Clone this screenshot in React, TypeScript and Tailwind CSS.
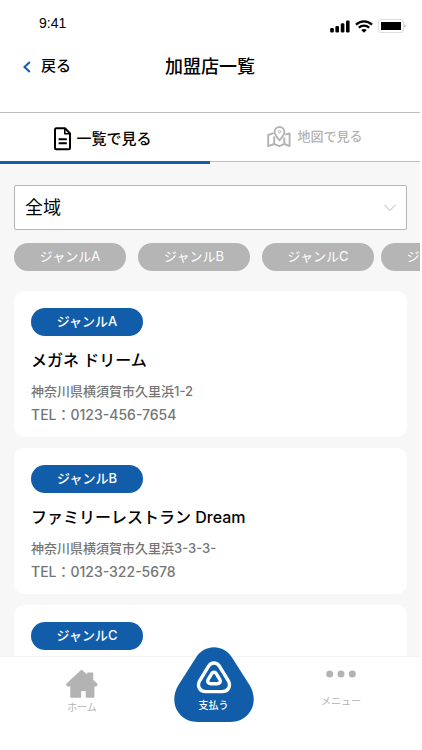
import clsx from "clsx";

type Shop = {
  genre: string;
  name?: string;
  address?: string;
  tel?: string;
};

const GENRE_GROUPS = [["ジャンルA", "ジャンルB", "ジャンルC"], ["ジャンルD"]];

const SHOPS: Shop[] = [
  {
    genre: "ジャンルA",
    name: "メガネ ドリーム",
    address: "神奈川県横須賀市久里浜1-2",
    tel: "0123-456-7654",
  },
  {
    genre: "ジャンルB",
    name: "ファミリーレストラン Dream",
    address: "神奈川県横須賀市久里浜3-3-3-",
    tel: "0123-322-5678",
  },
  { genre: "ジャンルC" },
];

function StatusBar() {
  return (
    <div className="flex h-[46px] items-center justify-between pr-[14px] pl-[39px]">
      <span className="font-['Liberation_Sans'] text-sm">9:41</span>
      <div className="mt-[6px] flex items-center gap-[5px]">
        <svg width="20" height="13" viewBox="0 0 20 13" aria-hidden="true">
          <rect x="0.2" y="8" width="3.6" height="4.6" rx="1.3" />
          <rect x="5.4" y="6" width="3.6" height="6.6" rx="1.3" />
          <rect x="10.8" y="3.3" width="3.6" height="9.3" rx="1.3" />
          <rect x="16" y="0.4" width="3.6" height="12.2" rx="1.3" />
        </svg>
        <svg
          width="18"
          height="13"
          viewBox="0 0 18 13"
          fill="none"
          stroke="black"
          strokeWidth="2.2"
          aria-hidden="true"
        >
          <path d="M1 4.6C5.6 .3 12.4 .3 17 4.6" />
          <path d="M3.8 7.6c3-2.7 7.4-2.7 10.4 0" />
          <path d="M6.2 10c1.6-1.4 4-1.4 5.6 0L9 12.7z" fill="black" stroke="none" />
        </svg>
        <svg width="28" height="14" viewBox="0 0 28 14" aria-hidden="true">
          <rect x="0.5" y="0.5" width="25" height="13" rx="2.5" fill="white" stroke="#dedede" />
          <rect x="3" y="3" width="20" height="8" />
          <path d="M26.6 5.2c1.2.4 1.2 3.2 0 3.6z" fill="#8a8a8a" />
        </svg>
      </div>
    </div>
  );
}

function DocumentIcon() {
  return (
    <svg
      width="18"
      height="24"
      viewBox="0 0 18 24"
      fill="none"
      stroke="currentColor"
      strokeWidth="2"
      strokeLinejoin="round"
      aria-hidden="true"
    >
      <path d="M2.2 1.3h8.8l5 5.2v14.6a1.2 1.2 0 0 1-1.2 1.2H2.2A1.2 1.2 0 0 1 1 21.100V2.5a1.2 1.2 0 0 1 1.2-1.2z" />
      <path d="M10.8 1.6v5.2h5.2" strokeWidth="1.6" />
      <path d="M4.6 12.2h8.2M4.6 16.2h8.2" />
    </svg>
  );
}

function MapIcon() {
  return (
    <svg
      width="24"
      height="22"
      viewBox="0 0 24 22"
      fill="none"
      stroke="currentColor"
      strokeWidth="1.9"
      strokeLinejoin="round"
      aria-hidden="true"
    >
      <path d="M6.6 7.2 1.2 9v11.2l6-2.2 5.1 2.2 5-2.2 5.3 2.2V7.4l-4.4 1.2" />
      <path d="M7.2 10.5V18M17.3 11.5V18" />
      <path d="M12.5 14.4C9.6 11 7.6 8.6 7.6 5.9a4.9 4.9 0 0 1 9.8 0c0 2.7-2 5.1-4.9 8.5z" />
      <circle cx="12.5" cy="5.7" r="1.2" strokeWidth="1" />
    </svg>
  );
}

function HomeIcon() {
  return (
    <svg
      width="32"
      height="30"
      viewBox="0 0 32 30"
      fill="currentColor"
      stroke="currentColor"
      strokeWidth="1.5"
      strokeLinejoin="round"
      aria-hidden="true"
    >
      <path d="M15.5 1.5 21.8 7V4.2h4.7v7l3.9 3.5c.8.8.3 2-.8 2h-1.9v11.4h-7.2v-5.3c0-1-.5-1.6-1.4-1.6h-3.3c-.9 0-1.4.6-1.4 1.6v5.3H5V16.700H2.1c-1.1 0-1.6-1.2-.8-2z" />
    </svg>
  );
}

function PayIcon() {
  return (
    <svg
      width="36"
      height="33"
      viewBox="0 0 36 33"
      fill="none"
      stroke="white"
      strokeWidth="3.4"
      aria-hidden="true"
    >
      <path d="M12.6 5.2C15.2 .9 20.8 .9 23.4 5.200L32.2 19.5C35.4 25 32.2 30.6 26.3 30.6H9.7C3.8 30.6 .6 25 3.800 19.5z" />
      <path d="M15.9 12.3c1-1.500 3.200-1.500 4.200 0l3.700 6.100c1.300 2.400.1 4.300-2.400 4.300h-6.800c-2.500 0-3.700-1.900-2.400-4.300z" />
    </svg>
  );
}

function ShopCard({ shop }: { shop: Shop }) {
  return (
    <li className="min-h-[146px] rounded-[10px] bg-white px-[17px] pt-[17px] pb-[11px]">
      <span className="flex h-7 w-28 items-center justify-center rounded-full bg-[#125daa] text-[13px] font-medium text-white">
        {shop.genre}
      </span>
      {shop.name && <h2 className="mt-3 text-base leading-6 font-medium">{shop.name}</h2>}
      {shop.address && (
        <p className="mt-2 text-[13px] leading-[23px] font-medium text-[#757575]">{shop.address}</p>
      )}
      {shop.tel && (
        <p className="text-sm leading-[23px] font-medium text-[#757575]">TEL：{shop.tel}</p>
      )}
    </li>
  );
}

export default function App() {
  return (
    <div className="flex h-screen flex-col overflow-hidden bg-white pr-0.5 font-[Inter,'Noto_Sans_CJK_JP',sans-serif] text-black">
      <header className="shrink-0 border-b border-[#bdbdbd] pb-[25px]">
        <StatusBar />
        <div className="grid h-[41px] grid-cols-[1fr_auto_1fr] items-center">
          <a href="#back" className="flex items-center gap-[10px] pl-[23px] text-[15px] font-medium">
            <svg
              width="8"
              height="12"
              viewBox="0 0 8 12"
              fill="none"
              stroke="#125daa"
              strokeWidth="2"
              aria-hidden="true"
            >
              <path d="M6.8 1 1.5 6l5.3 5" />
            </svg>
            戻る
          </a>
          <h1 className="text-lg font-medium">加盟店一覧</h1>
        </div>
      </header>

      <div className="flex min-h-0 flex-1 flex-col bg-[#f7f7f7]">
        {/* List / map switch */}
        <div role="tablist" className="grid shrink-0 grid-cols-2 items-start">
          <button
            role="tab"
            aria-selected="true"
            className="flex h-[51px] items-center justify-center gap-1 border-b-[3px] border-[#125daa] bg-white pt-1 pr-1 text-[15px] font-medium"
          >
            <DocumentIcon />
            一覧で見る
          </button>
          <button
            role="tab"
            aria-selected="false"
            className="flex h-[49px] items-center justify-center gap-[6px] border-b border-[#bdbdbd] bg-white text-[13px] font-medium text-[#b3b3b3]"
          >
            <MapIcon />
            地図で見る
          </button>
        </div>

        <main className="min-h-0 flex-1 overflow-y-auto pt-[21px] [scrollbar-width:none]">
          <div className="relative mr-[13px] ml-[14px]">
            <select
              aria-label="エリア"
              className="block h-[45px] w-full appearance-none rounded-[2px] border border-[#b5b5b5] bg-white px-[10px] text-lg"
            >
              <option>全域</option>
            </select>
            <svg
              className="pointer-events-none absolute top-[19px] right-[11px]"
              width="12"
              height="8"
              viewBox="0 0 12 8"
              fill="none"
              stroke="#b5b5b5"
              aria-hidden="true"
            >
              <path d="M.5.8 6 6.5 11.5.8" />
            </svg>
          </div>

          <div className="mt-[13px] flex gap-[7px] overflow-x-auto pl-[14px] [scrollbar-width:none]">
            {GENRE_GROUPS.map((group) => (
              <div key={group[0]} className="flex shrink-0 gap-3">
                {group.map((genre) => (
                  <button
                    key={genre}
                    className="h-7 w-28 rounded-full bg-[#b5b5b5] text-[13px] text-white"
                  >
                    {genre}
                  </button>
                ))}
              </div>
            ))}
          </div>

          <ul className="mt-5 mr-[13px] ml-[14px] flex flex-col gap-[11px] pb-5">
            {SHOPS.map((shop) => (
              <ShopCard key={shop.genre} shop={shop} />
            ))}
          </ul>
        </main>
      </div>

      <nav
        className={clsx(
          "relative flex h-[94px] shrink-0 items-start justify-between",
          "border-t border-[#f3f3f3] bg-white pr-[43px] pl-[42px] text-[10px] text-[#b3b3b3]",
        )}
      >
        <a href="#home" className="flex w-20 flex-col items-center pt-3">
          <HomeIcon />
          <span className="leading-4">ホーム</span>
        </a>

        <button className="relative -mt-[11px] flex h-[77px] w-20 flex-col items-center pt-[15px] text-white">
          <svg
            className="absolute inset-0"
            width="80"
            height="77"
            viewBox="0 0 80 77"
            fill="#125daa"
            aria-hidden="true"
          >
            <path d="M22 11.5C30.5-2.2 49.5-2.2 58 11.5L75.5 39C86 56 76 76 56 76H24C4 76-6 56 4.5 39z" />
          </svg>
          <span className="relative flex flex-col items-center gap-[3px]">
            <PayIcon />
            <span className="leading-4 font-medium">支払う</span>
          </span>
        </button>

        <a href="#menu" className="flex w-[72px] flex-col items-center gap-[15px] pt-[13px]">
          <svg width="30" height="8" viewBox="0 0 30 8" fill="currentColor" aria-hidden="true">
            <circle cx="3.7" cy="4" r="3.5" />
            <circle cx="15" cy="4" r="3.5" />
            <circle cx="26.3" cy="4" r="3.5" />
          </svg>
          <span className="leading-4">メニュー</span>
        </a>
      </nav>
    </div>
  );
}
